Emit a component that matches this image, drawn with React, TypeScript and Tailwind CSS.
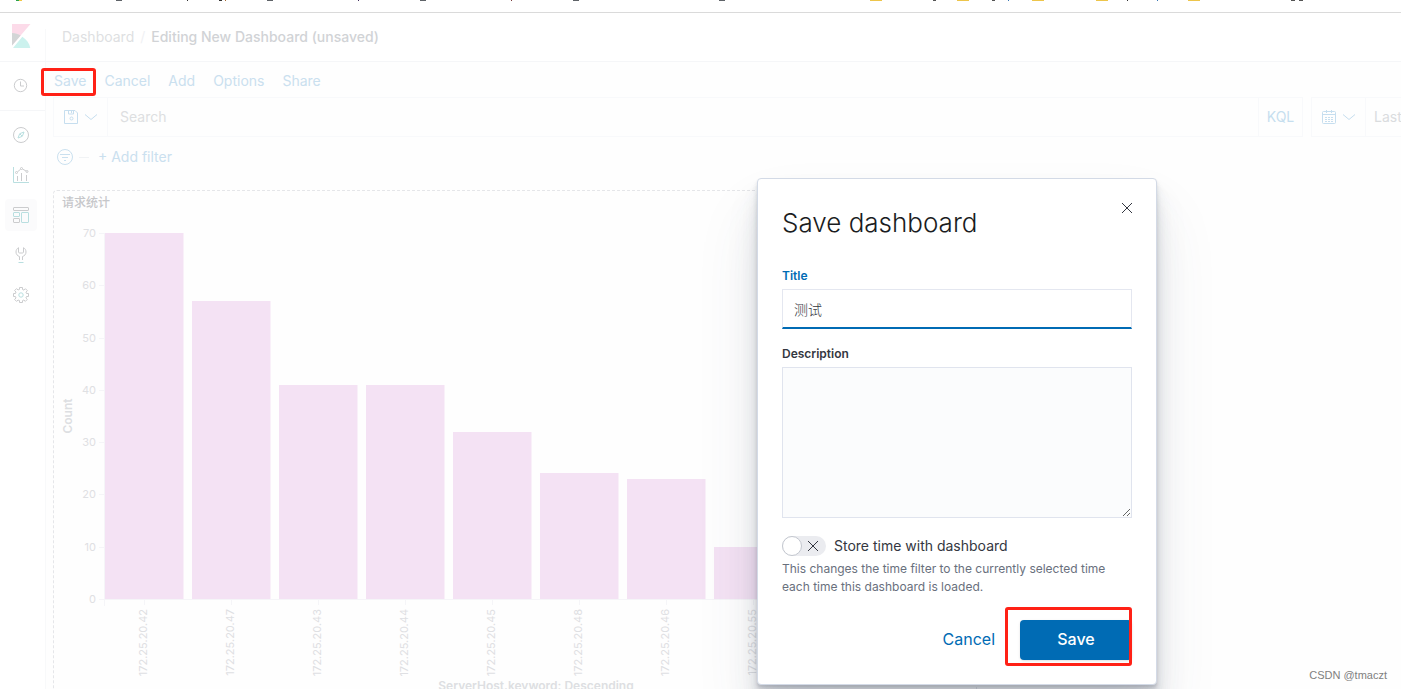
import { useState } from "react";
import type { ReactNode } from "react";

const BARS = [
  { host: "172.25.20.42", count: 70 },
  { host: "172.25.20.47", count: 57 },
  { host: "172.25.20.43", count: 41 },
  { host: "172.25.20.44", count: 41 },
  { host: "172.25.20.45", count: 32 },
  { host: "172.25.20.48", count: 24 },
  { host: "172.25.20.46", count: 23 },
  { host: "172.25.20.55", count: 10 },
];

const TICKS = [70, 60, 50, 40, 30, 20, 10, 0];

// Bookmark strip: only the lower edge of each entry is on screen
const BOOKMARKS = [
  { x: 16, w: 3, color: "#2ba24c" },
  { x: 19, w: 3, color: "#f2c744" },
  { x: 116, w: 6, color: "#5f6368" },
  { x: 187, w: 1, color: "#333333" },
  { x: 219, w: 3, color: "#333333" },
  { x: 225, w: 1, color: "#a86b32" },
  { x: 267, w: 6, color: "#5f6368" },
  { x: 358, w: 1, color: "#44305f" },
  { x: 420, w: 6, color: "#5f6368" },
  { x: 511, w: 1, color: "#7a3a3a" },
  { x: 573, w: 6, color: "#5f6368" },
  { x: 719, w: 6, color: "#5f6368" },
  { x: 870, w: 12, color: "#edc54b" },
  { x: 933, w: 3, color: "#555555" },
  { x: 957, w: 12, color: "#edc54b" },
  { x: 992, w: 3, color: "#555555" },
  { x: 1008, w: 1, color: "#3b78b5" },
  { x: 1032, w: 12, color: "#edc54b" },
  { x: 1096, w: 12, color: "#edc54b" },
  { x: 1127, w: 1, color: "#333333" },
  { x: 1157, w: 1, color: "#3b78b5" },
  { x: 1188, w: 12, color: "#edc54b" },
  { x: 1291, w: 4, color: "#555555" },
  { x: 1299, w: 4, color: "#555555" },
];

function Icon({ children, className = "" }: { children: ReactNode; className?: string }) {
  return (
    <svg
      viewBox="0 0 16 16"
      className={`w-4 h-4 shrink-0 ${className}`}
      fill="none"
      stroke="currentColor"
      aria-hidden="true"
    >
      {children}
    </svg>
  );
}

const TEAL = "#b9dfe0";

function KibanaLogo() {
  return (
    <svg width="19" height="24" viewBox="0 0 19 24" aria-hidden="true">
      <path d="M0 0h18.5L0 21.5z" fill="#fcdbe9" />
      <path d="M0 9c3.2 0 6.200.9 8.700 2.400L0 21.500z" fill="#d3d5d6" />
      <path d="M10.300 12.800 1 24h17.300c-.9-4.700-3.900-8.700-8-11.200z" fill="#ccf2ee" />
    </svg>
  );
}

function ClockIcon() {
  return (
    <Icon>
      <circle cx="7.500" cy="7.500" r="6.200" />
      <path d="M7.500 3.500v4.500H11" />
    </Icon>
  );
}

function CompassIcon() {
  return (
    <Icon>
      <circle cx="8" cy="8" r="7.500" />
      <path stroke={TEAL} d="M11 5 9.300 9.300 5 11l1.700-4.300z" />
      <path stroke={TEAL} d="m7 7 2 2" />
    </Icon>
  );
}

function VisualizeIcon() {
  return (
    <Icon>
      <path stroke={TEAL} d="M.5 0v15.500H16" />
      <path d="M4.500 9v5M8.500 6v8M13.500 8v6" />
      <circle cx="3.500" cy="5.500" r="1" />
      <circle cx="8.500" cy="1.500" r="1" />
      <circle cx="14" cy="4.500" r="1" />
      <path d="m4.500 4.800 3.200-2.600M9.500 2l3.500 2" />
    </Icon>
  );
}

function DashboardIcon() {
  return (
    <Icon>
      <rect x=".5" y=".5" width="15" height="3" rx=".5" />
      <rect x=".5" y="5.500" width="6" height="4" rx=".5" stroke={TEAL} />
      <rect x=".5" y="11.500" width="6" height="4" rx=".5" />
      <rect x="8.500" y="5.500" width="7" height="10" rx=".5" stroke={TEAL} />
    </Icon>
  );
}

function WrenchIcon() {
  return (
    <Icon>
      <path d="M6.500 13V9.500C4.500 8.900 3 7.300 3 5c0-2 1-3.500 2.500-4.300V5c0 .6.400 1 1 1h3c.6 0 1-.4 1-1V.7C12 1.500 13 3 13 5c0 2.300-1.500 3.900-3.500 4.500V13" />
      <path stroke={TEAL} d="M5.500 15.500h5" />
    </Icon>
  );
}

function GearIcon() {
  return (
    <Icon>
      <path d="M6.500.5h3v2l1.500.6 1.400-1.400 2 2L13 5.100l.5 1.400h2v3h-2l-.6 1.500 1.400 1.400-2 2-1.400-1.400-1.400.6v1.900h-3v-2L5 13l-1.400 1.400-2-2L3 11l-.6-1.500H.5v-3h2L3 5 1.600 3.600l2-2L5 3l1.500-.6z" />
      <circle cx="8" cy="8" r="2.200" stroke={TEAL} />
    </Icon>
  );
}

function ChevronDown() {
  return (
    <Icon>
      <path d="m2 5.500 6 5 6-5" />
    </Icon>
  );
}

function DiskIcon() {
  return (
    <Icon>
      <path d="M1.500 1.500h10.500l2.500 2.500v10.500h-13z" />
      <path d="M5.500 1.500V5h5V1.500M8.500 2V4" />
      <circle cx="8.500" cy="9.500" r="1.500" />
    </Icon>
  );
}

function CalendarIcon() {
  return (
    <Icon>
      <rect x="1.500" y="2.500" width="13" height="12" rx="1" />
      <path d="M1.500 5.500h13M5.500 1v3M10.500 1v3" />
      <path strokeDasharray="2 1" d="M4 8.500h8M4 10.500h8M4 12.500h8" />
    </Icon>
  );
}

function CrossIcon() {
  return (
    <Icon>
      <path d="m3 3 10 10M13 3 3 13" />
    </Icon>
  );
}

function NavButton({ label, active, children }: { label: string; active?: boolean; children: ReactNode }) {
  return (
    <button
      type="button"
      aria-label={label}
      className={`w-8 h-8 my-1 flex items-center justify-center rounded ${active ? "bg-[#fbfbfc]" : ""}`}
    >
      {children}
    </button>
  );
}

function Sidebar() {
  return (
    <nav className="w-[46px] shrink-0 border-r border-[#f8f9fa] bg-white text-[#cbccce]">
      <div className="h-[49px] flex justify-center items-center border-b border-[#f5f6f8] pr-1">
        <NavButton label="Recently viewed">
          <ClockIcon />
        </NavButton>
      </div>
      <div className="flex flex-col items-center pt-1 pr-1">
        <NavButton label="Discover">
          <CompassIcon />
        </NavButton>
        <NavButton label="Visualize">
          <VisualizeIcon />
        </NavButton>
        <NavButton label="Dashboard" active>
          <DashboardIcon />
        </NavButton>
        <NavButton label="Dev Tools">
          <WrenchIcon />
        </NavButton>
        <NavButton label="Management">
          <GearIcon />
        </NavButton>
      </div>
    </nav>
  );
}

function Header() {
  return (
    <header className="h-[49px] flex items-stretch bg-white border-b border-[#f5f6f8]">
      <a href="#home" aria-label="Kibana home" className="w-[45px] flex items-start pt-[11px] pl-3">
        <KibanaLogo />
      </a>
      <div className="mt-4 border-l border-[#f8f9fa]" />
      <div className="flex items-center gap-[6px] pl-4 text-sm">
        <a href="#dashboards" className="text-[#dedfe2]">Dashboard</a>
        <span className="text-[#f0f1f4]">/</span>
        <span className="font-medium text-[#d1d3d6]">Editing New Dashboard (unsaved)</span>
      </div>
    </header>
  );
}

function QueryBar() {
  return (
    <div className="flex gap-2 h-10 text-sm text-[#c6deef]">
      <div className="flex flex-1 border border-[#f8f9fb] bg-[#fefefe]">
        <button
          type="button"
          aria-label="Saved queries"
          className="w-[54px] flex items-center justify-center gap-1 border-r border-[#f8f9fb]"
        >
          <DiskIcon />
          <ChevronDown />
        </button>
        <input
          aria-label="Search"
          placeholder="Search"
          className="flex-1 min-w-0 px-3 outline-none placeholder:text-[#dddfe1]"
        />
        <button type="button" className="w-11 border-l border-[#f8f9fb]">KQL</button>
      </div>
      <div className="flex w-[90px] border border-r-0 border-[#f8f9fb] bg-[#fefefe]">
        <button
          type="button"
          aria-label="Quick select"
          className="w-[54px] shrink-0 flex items-center justify-center gap-1 border-r border-[#f8f9fb]"
        >
          <CalendarIcon />
          <ChevronDown />
        </button>
        <button type="button" className="pl-2 text-[#dadcde]">Last</button>
      </div>
    </div>
  );
}

function CountChart() {
  const base = 390;
  const scale = 5.23;
  return (
    <svg width="922" height="500" viewBox="0 0 922 500" className="block" role="img" aria-label="Count by ServerHost">
      <g stroke="#f5f5f8" shapeRendering="crispEdges">
        <path d={`M50.500 24V${base + 7}M50 ${base + 0.5}H914`} />
        {TICKS.map((t) => (
          <path key={t} d={`M45 ${Math.round(base - t * scale) + 0.5}h5`} />
        ))}
        {BARS.map((b, i) => (
          <path key={b.host} d={`M${90.5 + i * 87} ${base}v6`} />
        ))}
      </g>
      {BARS.map((b, i) => (
        <rect
          key={b.host}
          x={51 + i * 87}
          y={Math.round(base - b.count * scale)}
          width="78.500"
          height={Math.round(b.count * scale)}
          fill="#f4e2f4"
        />
      ))}
      <g fill="#dfe0e3" fontSize="11">
        {TICKS.map((t) => (
          <text key={t} x="42" y={base - t * scale + 4} textAnchor="end">
            {t}
          </text>
        ))}
        {BARS.map((b, i) => (
          <text key={b.host} textAnchor="end" transform={`translate(${93 + i * 87} 400) rotate(-90)`}>
            {b.host}
          </text>
        ))}
      </g>
      <g fill="#dddfe2" fontSize="12" fontWeight="600" textAnchor="middle">
        <text transform="translate(18 207) rotate(-90)">Count</text>
        <text x="482" y="481">ServerHost.keyword: Descending</text>
      </g>
    </svg>
  );
}

function DashboardPage() {
  return (
    <main className="flex-1 min-w-0 bg-[#fefefe]">
      <div className="relative flex items-center gap-[18px] h-[35px] pt-[3px] pl-2 text-sm text-[#cae0ef]">
        <button type="button">Save</button>
        <button type="button">Cancel</button>
        <button type="button">Add</button>
        <button type="button">Options</button>
        <button type="button">Share</button>
        <div className="absolute -left-[5px] top-[6px] w-[55px] h-7 rounded-[3px] border-[3px] border-[#ff2116] pointer-events-none" />
      </div>
      <div className="pl-[7px]">
        <QueryBar />
        <div className="flex items-center h-10 pl-1 text-sm text-[#cae0ef]">
          <button type="button" aria-label="Filter options">
            <Icon>
              <circle cx="8" cy="8" r="7.500" />
              <path d="M3 5.500h10M5 8.500h6M7 11.500h2" />
            </Icon>
          </button>
          <span className="w-[10px] ml-[6px] mr-[9px] border-t border-[#f1f3f5]" />
          <button type="button">+ Add filter</button>
        </div>
      </div>
      <section className="w-[924px] ml-[7px] mt-[13px] rounded border border-dashed border-[#e5e6e9] bg-[#fefefe]">
        <h2 className="h-[18px] pt-[2px] pl-2 text-xs leading-5 font-medium text-[#c6c7ca]">请求统计</h2>
        <CountChart />
      </section>
    </main>
  );
}

function SaveModal() {
  const [title, setTitle] = useState("测试");
  const [description, setDescription] = useState("");
  const [storeTime, setStoreTime] = useState(false);

  return (
    <div
      role="dialog"
      aria-labelledby="save-title"
      className="absolute top-[178px] right-[244px] w-[400px] px-6 py-6 rounded border border-[#d3dae6] bg-white shadow-[0_40px_64px_0_rgba(65,78,101,0.1),0_24px_32px_0_rgba(65,78,101,0.1),0_16px_16px_0_rgba(65,78,101,0.1),0_8px_8px_0_rgba(65,78,101,0.1),0_4px_4px_0_rgba(65,78,101,0.1),0_2px_2px_0_rgba(65,78,101,0.1)]"
    >
      <button type="button" aria-label="Close" className="absolute top-[21px] right-[21px] text-[#343741]">
        <CrossIcon />
      </button>
      <h1 id="save-title" className="text-[26px] leading-10 font-light text-[#1a1c21]">
        Save dashboard
      </h1>

      <label htmlFor="title" className="block mt-6 text-xs leading-[18px] font-semibold text-[#006bb4]">
        Title
      </label>
      <input
        id="title"
        value={title}
        onChange={(e) => setTitle(e.target.value)}
        className="block w-full h-10 mt-1 px-[11px] text-sm font-light text-[#343741] bg-white border border-b-2 border-[#e4e7f0] border-b-[#006bb4] outline-none"
      />

      <label htmlFor="description" className="block mt-4 text-xs leading-[18px] font-semibold text-[#343741]">
        Description
      </label>
      <textarea
        id="description"
        value={description}
        onChange={(e) => setDescription(e.target.value)}
        className="block w-full h-[151px] mt-1 p-3 text-sm bg-[#fbfcfd] border border-[#e0e4ee] outline-none resize-y"
      />

      <label className="flex items-center gap-2 h-5 mt-[18px] text-sm text-[#343741]">
        <input
          type="checkbox"
          role="switch"
          checked={storeTime}
          onChange={(e) => setStoreTime(e.target.checked)}
          className="sr-only"
        />
        <span className="flex items-center justify-between w-11 h-5 pr-[5px] rounded-full bg-[#ebecf0]">
          <span className="w-5 h-5 rounded-full border border-[#c3c7cf] bg-white" />
          <CrossIcon />
        </span>
        Store time with dashboard
      </label>
      <p className="mt-1 text-xs leading-[18px] text-[#69707d]">
        This changes the time filter to the currently selected time each time this dashboard is loaded.
      </p>

      <div className="relative flex justify-end items-center gap-[25px] mt-6">
        <button type="button" className="pb-[2px] text-base text-[#006bb4]">Cancel</button>
        <button
          type="button"
          className="w-28 h-10 pb-[2px] rounded bg-[#006bb4] text-base font-medium text-white shadow-sm"
        >
          Save
        </button>
        <div className="absolute right-0 -top-[13px] w-[127px] h-[59px] rounded-[3px] border-[3px] border-[#ff2116] pointer-events-none" />
      </div>
    </div>
  );
}

export default function App() {
  return (
    <div className="relative flex flex-col h-screen overflow-hidden bg-white font-[Inter,'Noto_Sans_CJK_SC',sans-serif]">
      <div className="h-[13px] shrink-0 overflow-hidden border-b border-[#dadada]">
        <svg width="1401" height="2" className="block" aria-hidden="true">
          {BOOKMARKS.map((b) => (
            <rect key={b.x} x={b.x} y="0" width={b.w} height="1" fill={b.color} />
          ))}
        </svg>
      </div>
      <Header />
      <div className="flex flex-1 min-h-0">
        <Sidebar />
        <DashboardPage />
      </div>
      <SaveModal />
      <p className="absolute right-[14px] bottom-[6px] text-[11px] leading-4 text-[#808080] font-['Liberation_Sans',sans-serif]">
        CSDN @tmaczt
      </p>
    </div>
  );
}
